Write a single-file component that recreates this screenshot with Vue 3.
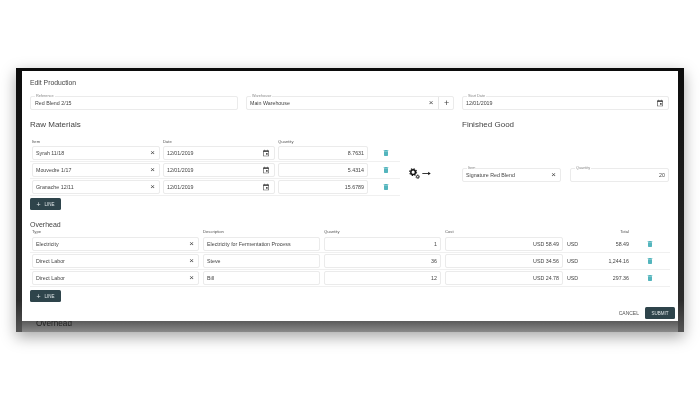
<template>
  <div class="page">
    <div class="backdrop">
      <div class="dialog">
        <div class="dialog-title">Edit Production</div>

        <div class="top-row">
          <div class="field outlined first">
            <span class="legend">Reference</span>
            <span class="value">Red Blend 2/15</span>
          </div>
          <div class="field outlined">
            <span class="legend">Warehouse</span>
            <span class="value">Main Warehouse</span>
            <span class="clear">×</span>
            <span class="add">+</span>
          </div>
          <div class="field outlined">
            <span class="legend">Start Date</span>
            <span class="value">12/01/2019</span>
            <svg class="cal" viewBox="0 0 24 24"><path d="M19 4h-1V2h-2v2H8V2H6v2H5a2 2 0 0 0-2 2v14a2 2 0 0 0 2 2h14a2 2 0 0 0 2-2V6a2 2 0 0 0-2-2zm0 16H5V9h14v11zm-7-8h5v5h-5z" /></svg>
          </div>
        </div>

        <div class="production">
          <div class="raw">
            <h2 class="section">Raw Materials</h2>
            <div class="raw-grid head">
              <span>Item</span><span>Date</span><span>Quantity</span><span></span>
            </div>
            <div class="raw-grid row" v-for="m in materials" :key="m.item">
              <div class="field"><span class="value">{{ m.item }}</span><span class="clear">×</span></div>
              <div class="field">
                <span class="value">{{ m.date }}</span>
                <svg class="cal" viewBox="0 0 24 24"><path d="M19 4h-1V2h-2v2H8V2H6v2H5a2 2 0 0 0-2 2v14a2 2 0 0 0 2 2h14a2 2 0 0 0 2-2V6a2 2 0 0 0-2-2zm0 16H5V9h14v11zm-7-8h5v5h-5z" /></svg>
              </div>
              <div class="field right"><span class="value">{{ m.qty }}</span></div>
              <svg class="trash" viewBox="0 0 24 24"><path d="M6 19a2 2 0 0 0 2 2h8a2 2 0 0 0 2-2V7H6zM19 4h-3.500l-1-1h-5l-1 1H5v2h14z" /></svg>
            </div>
            <button class="line-btn"><span class="plus">+</span>LINE</button>
          </div>

          <div class="convert">
            <svg class="gears" viewBox="0 0 24 24">
              <circle cx="9" cy="9" r="5" fill="none" stroke="#111" stroke-width="3.200" />
              <circle cx="9" cy="9" r="7.500" fill="none" stroke="#111" stroke-width="2.400" stroke-dasharray="2.900 3" />
              <circle cx="19" cy="19" r="2.600" fill="none" stroke="#111" stroke-width="2" />
              <circle cx="19" cy="19" r="4.200" fill="none" stroke="#111" stroke-width="1.400" stroke-dasharray="1.600 1.700" />
            </svg>
            <svg class="arrow" viewBox="0 0 10 6">
              <path d="M0 3h7.500" stroke="#111" stroke-width="1" />
              <path d="M7 1l3 2-3 2z" fill="#111" />
            </svg>
          </div>

          <div class="finished">
            <h2 class="section">Finished Good</h2>
            <div class="finished-row">
              <div class="field outlined">
                <span class="legend">Item</span>
                <span class="value">Signature Red Blend</span>
                <span class="clear">×</span>
              </div>
              <div class="field outlined right">
                <span class="legend">Quantity</span>
                <span class="value">20</span>
              </div>
            </div>
          </div>
        </div>

        <h3 class="overhead-title">Overhead</h3>
        <div class="over-grid head">
          <span>Type</span><span>Description</span><span>Quantity</span><span>Cost</span><span></span>
          <span class="total-head">Total</span><span></span>
        </div>
        <div class="over-grid row" v-for="o in overhead" :key="o.desc">
          <div class="field"><span class="value">{{ o.type }}</span><span class="clear">×</span></div>
          <div class="field"><span class="value">{{ o.desc }}</span></div>
          <div class="field right"><span class="value">{{ o.qty }}</span></div>
          <div class="field right"><span class="value">{{ o.cost }}</span></div>
          <span class="cur">USD</span>
          <span class="total">{{ o.total }}</span>
          <svg class="trash" viewBox="0 0 24 24"><path d="M6 19a2 2 0 0 0 2 2h8a2 2 0 0 0 2-2V7H6zM19 4h-3.500l-1-1h-5l-1 1H5v2h14z" /></svg>
        </div>
        <button class="line-btn second"><span class="plus">+</span>LINE</button>

        <div class="actions">
          <span class="cancel">CANCEL</span>
          <button class="submit">SUBMIT</button>
        </div>
      </div>
      <div class="behind"><span>Overhead</span></div>
    </div>
  </div>
</template>

<script setup>
const materials = [
  { item: 'Syrah 11/18', date: '12/01/2019', qty: '8.7631' },
  { item: 'Mouvedre 1/17', date: '12/01/2019', qty: '5.4314' },
  { item: 'Granache 12/11', date: '12/01/2019', qty: '15.6789' }
]

const overhead = [
  { type: 'Electricity', desc: 'Electricity for Fermentation Process', qty: '1', cost: 'USD 58.49', total: '58.49' },
  { type: 'Direct Labor', desc: 'Steve', qty: '36', cost: 'USD 34.56', total: '1,244.16' },
  { type: 'Direct Labor', desc: 'Bill', qty: '12', cost: 'USD 24.78', total: '297.36' }
]
</script>

<style>
html, body {
  margin: 0;
  background: #fff;
}
</style>

<style scoped>
.page {
  width: 700px;
  height: 400px;
  padding: 68px 16px 0;
  box-sizing: border-box;
  font-family: "Liberation Sans", Arial, sans-serif;
  color: #444;
  overflow: hidden;
  filter: blur(0.4px);
}

.backdrop {
  height: 264px;
  padding: 3px 6px 0;
  box-sizing: border-box;
  background: linear-gradient(#0c0c0c, #2c2c2c 88%, #555);
  box-shadow: 0 5px 14px rgba(0, 0, 0, 0.35);
}

.dialog {
  height: 250px;
  padding: 7px 9px 0 8px;
  box-sizing: border-box;
  background: #fff;
}

.dialog-title {
  font-size: 6.800px;
  line-height: 9px;
}

.top-row {
  display: grid;
  grid-template-columns: 208px 208px 207px;
  column-gap: 8px;
  margin-top: 9px;
}

.field {
  position: relative;
  display: flex;
  align-items: center;
  height: 14px;
  padding: 0 3px;
  box-sizing: border-box;
  background: #fff;
  border: 1px solid #ebebeb;
  border-radius: 2px;
  font-size: 5.300px;
  min-width: 0;
}

.field.first {
  padding-left: 4px;
}

.field .value {
  flex: 1;
  white-space: nowrap;
}

.field.right .value {
  text-align: right;
}

.legend {
  position: absolute;
  left: 4px;
  top: -3px;
  padding: 0 1px;
  background: #fff;
  font-size: 3.800px;
  line-height: 4px;
  color: #888;
}

.clear {
  font-size: 8px;
  line-height: 8px;
  color: #444;
  margin-right: 1px;
}

.add {
  margin-left: 3.500px;
  padding-left: 5px;
  border-left: 1px solid #e6e6e6;
  font-size: 9px;
  line-height: 12px;
  width: 6px;
  color: #444;
}

.cal {
  width: 8px;
  height: 8px;
  fill: #555;
  margin-right: 1px;
}

.production {
  display: grid;
  grid-template-columns: 370px 62px 207px;
  margin-top: 8px;
}

.section {
  margin: 0;
  font-size: 8px;
  font-weight: 400;
  line-height: 13px;
}

.raw-grid {
  display: grid;
  grid-template-columns: 128px 112px 90px 29px;
  column-gap: 3px;
  align-items: center;
  padding-left: 2px;
}

.raw-grid.head {
  margin-top: 8px;
  height: 6px;
}

.head span {
  font-size: 4.200px;
  line-height: 6px;
  color: #555;
}

.row {
  height: 17px;
  border-bottom: 1px solid #f0f0f0;
  box-sizing: border-box;
}

.trash {
  width: 8px;
  height: 8px;
  fill: #53b5bd;
  justify-self: center;
}

.line-btn {
  display: flex;
  align-items: center;
  justify-content: center;
  width: 31px;
  height: 12px;
  margin-top: 2px;
  padding: 0;
  border: none;
  border-radius: 1.500px;
  background: #2e444b;
  color: #dfe6e8;
  font-family: inherit;
  font-size: 4.500px;
}

.plus {
  font-size: 7px;
  line-height: 7px;
  margin-right: 4px;
}

.convert {
  display: flex;
  align-items: center;
  align-self: start;
  gap: 2px;
  padding: 50px 0 0 9px;
}

.gears {
  width: 11px;
  height: 11px;
}

.arrow {
  width: 9px;
  height: 5px;
}

.finished-row {
  display: grid;
  grid-template-columns: 99px 99px;
  column-gap: 9px;
  margin-top: 37px;
}

.overhead-title {
  margin: 9.500px 0 0;
  font-size: 7px;
  font-weight: 400;
  line-height: 9px;
}

.over-grid {
  display: grid;
  grid-template-columns: 167px 117px 117px 118px 24px 34px 37px;
  column-gap: 4px;
  align-items: center;
  padding-left: 2px;
  width: 640px;
  box-sizing: border-box;
}

.over-grid.head {
  height: 7px;
}

.total-head,
.total {
  text-align: right;
}

.total,
.cur {
  font-size: 5.300px;
}

.over-grid > .trash {
  justify-self: start;
  margin-left: 13px;
}

.line-btn.second {
  margin-top: 3.500px;
}

.actions {
  display: flex;
  justify-content: flex-end;
  align-items: center;
  gap: 6px;
  margin-top: 5px;
  margin-right: -6px;
}

.cancel {
  font-size: 5px;
  color: #555;
}

.submit {
  width: 30px;
  height: 12px;
  padding: 0;
  border: none;
  border-radius: 1.500px;
  background: #2e444b;
  color: #dfe6e8;
  font-family: inherit;
  font-size: 4.500px;
}

.behind {
  height: 11px;
  padding-left: 14px;
  overflow: hidden;
  background: linear-gradient(#5a5a5a, #8a8a8a);
}

.behind span {
  display: block;
  margin-top: -3px;
  font-size: 8.200px;
  line-height: 11px;
  color: #222;
}
</style>
